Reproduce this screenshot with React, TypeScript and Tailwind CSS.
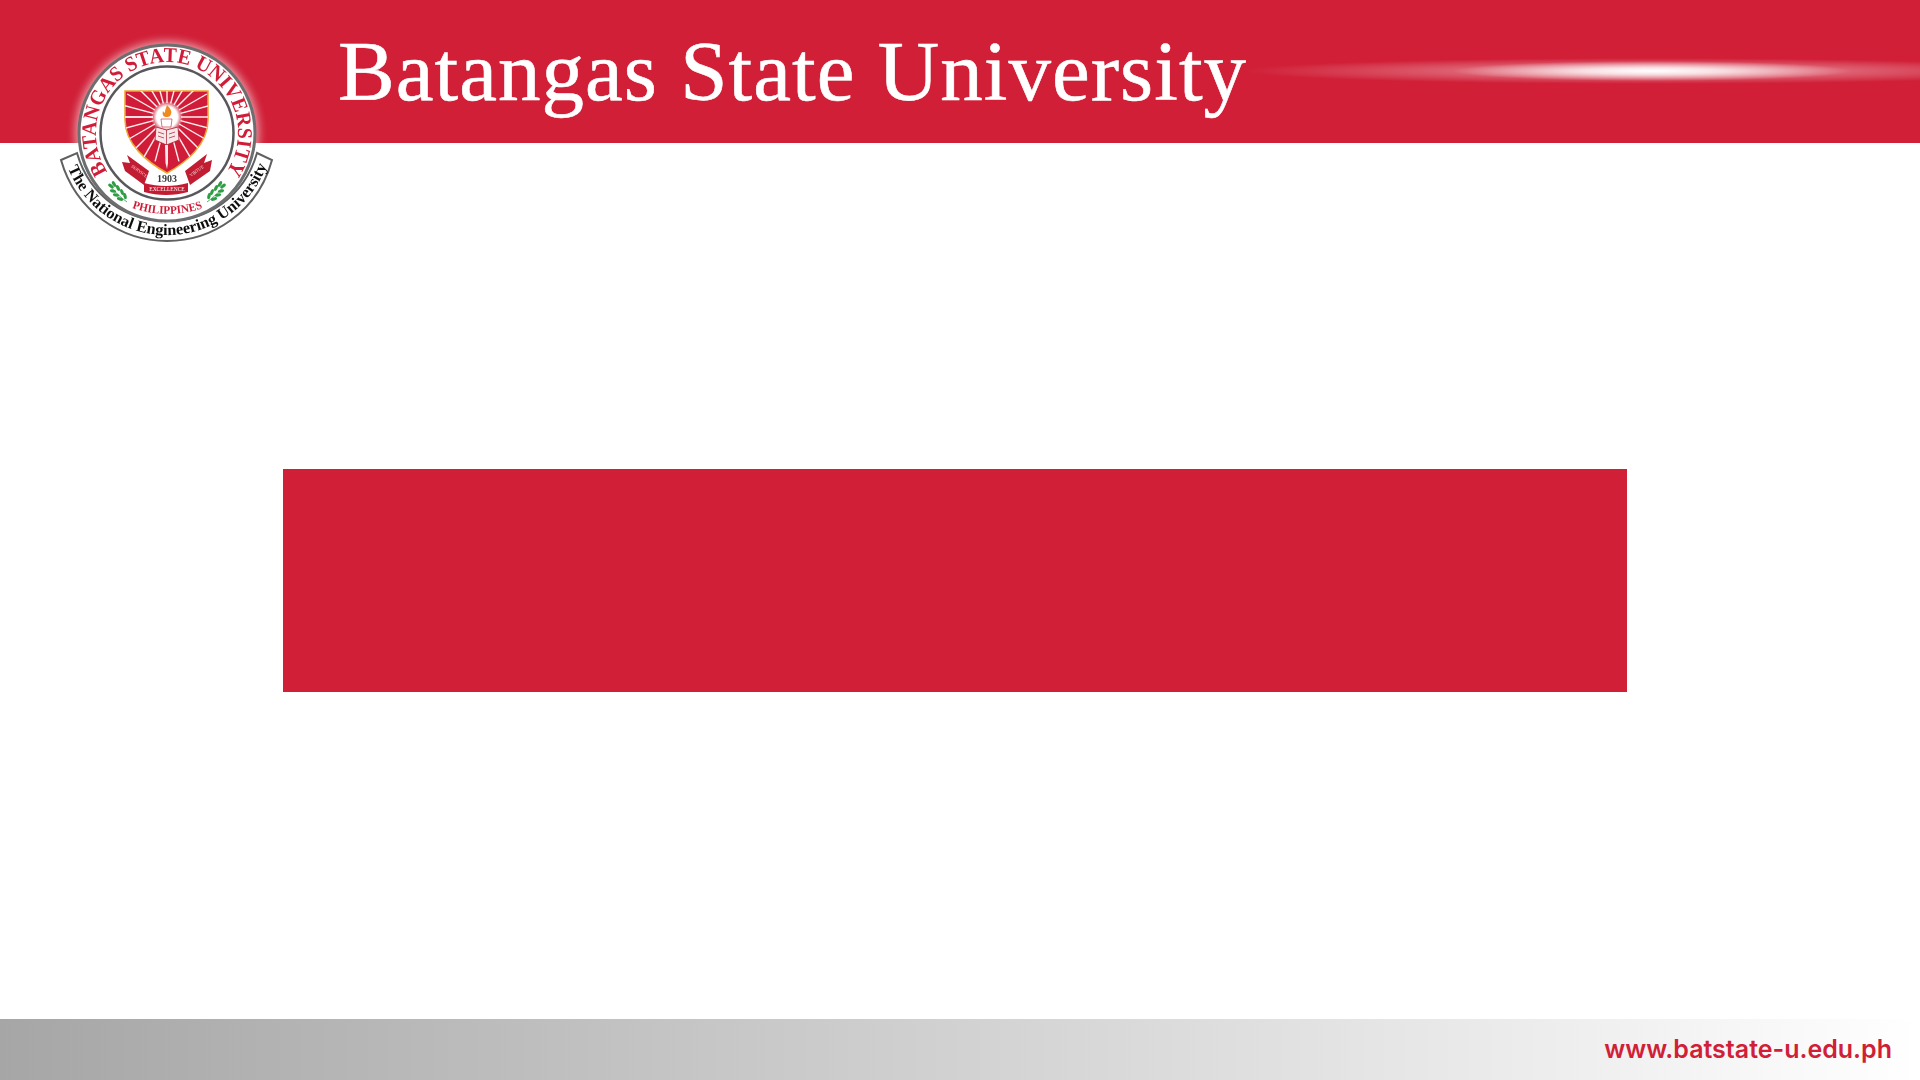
import React from 'react';

const RED = '#d01f37';
const SERIF = "'Liberation Serif', serif";

// Seal of the university, drawn in the coordinates of a 260x240 box
const Laurel: React.FC<{ mirror?: boolean }> = ({ mirror }) => {
  const leaves = [
    [71, 166, 35],
    [74, 164, 60],
    [73, 171, 15],
    [78, 168, 65],
    [76, 175, 15],
    [82, 172, 70],
    [80, 179, 20],
    [85, 176, 75],
  ];
  return (
    <g transform={mirror ? 'translate(254 0) scale(-1 1)' : undefined} fill="#2f9e44">
      <path d="M69 165C74 171 80 177 87 182" stroke="#2f9e44" strokeWidth="0.8" fill="none" />
      {leaves.map(([x, y, r]) => (
        <ellipse key={`${x}-${y}`} cx={x} cy={y} rx="3.2" ry="1.6" transform={`rotate(${r} ${x} ${y})`} />
      ))}
    </g>
  );
};

const Seal: React.FC = () => {
  const rays = Array.from({ length: 25 }, (_, i) => -180 + i * 15);
  return (
    <svg viewBox="0 0 260 240" className="absolute left-[40px] top-[20px] w-[260px] h-[240px]">
      <defs>
        <filter id="glow" x="-20%" y="-20%" width="140%" height="140%">
          <feGaussianBlur stdDeviation="4" />
        </filter>
        <filter id="soft" x="-5%" y="-5%" width="110%" height="110%">
          <feGaussianBlur stdDeviation="0.35" />
        </filter>
        <clipPath id="shield">
          <path d="M85 71H168V100C168 124 147 142 127 153C107 142 85 124 85 100Z" />
        </clipPath>
        <radialGradient id="halo">
          <stop offset="0%" stopColor="#ffffff" />
          <stop offset="65%" stopColor="#ffffff" />
          <stop offset="100%" stopColor="#ffffff" stopOpacity="0" />
        </radialGradient>
        <path id="bandText" d="M28 148A106.5 106.5 0 0 0 227 145" />
        <path id="ringText" d="M67.5 151.7A71 71 0 1 1 186.5 151.7" />
        <path id="philText" d="M92 188A110 110 0 0 0 163 188" />
      </defs>

      <circle cx="127" cy="113" r="92" fill="#ffffff" opacity="0.55" filter="url(#glow)" />

      <g filter="url(#soft)">
        {/* lower band */}
        <path
          d="M21 140L37 133C50 178 88 201 127 201C166 201 204 178 217 133L232 140C218 192 172 221 127 221C82 221 36 192 21 140Z"
          fill="#ffffff"
          stroke="#5f6062"
          strokeWidth="2"
        />

        {/* ring */}
        <circle cx="127" cy="113" r="88" fill="#ffffff" stroke="#6d6e70" strokeWidth="3" />
        <circle cx="127" cy="113" r="66.5" fill="#ffffff" stroke="#58595b" strokeWidth="2.5" />

        <text fill={RED} fontFamily={SERIF} fontWeight="700" fontSize="21">
          <textPath href="#ringText" textLength="305" lengthAdjust="spacingAndGlyphs">
            BATANGAS STATE UNIVERSITY
          </textPath>
        </text>

        <text fill="#111111" fontFamily={SERIF} fontWeight="700" fontSize="16">
          <textPath href="#bandText" textLength="256" lengthAdjust="spacingAndGlyphs">
            The National Engineering University
          </textPath>
        </text>

        {/* shield */}
        <path d="M85 71H168V100C168 124 147 142 127 153C107 142 85 124 85 100Z" fill={RED} stroke="#efa52e" strokeWidth="1.5" />
        <g clipPath="url(#shield)" stroke="#fdeef0" strokeWidth="1.4">
          {rays.map((deg) => (
            <line
              key={deg}
              x1={127 + 14 * Math.cos((deg * Math.PI) / 180)}
              y1={97 + 14 * Math.sin((deg * Math.PI) / 180)}
              x2={127 + 46 * Math.cos((deg * Math.PI) / 180)}
              y2={97 + 46 * Math.sin((deg * Math.PI) / 180)}
            />
          ))}
        </g>
        <circle cx="127" cy="97" r="16" fill="url(#halo)" />
        <path d="M127 85C131 89 132 92 131 94C130 97 128 97 126 97C123 97 122 94 123 91C124 93 125 93 125 92C125 90 126 88 127 85Z" fill="#f08a1d" />
        <path d="M121 99H132L131 107H122Z" fill="#ffffff" stroke="#c93a4d" strokeWidth="0.7" />
        <path d="M116 107L126.5 110L138 107L139 120L126.5 125L115 120Z" fill="#f9e6e8" stroke="#a61a2d" strokeWidth="0.8" />
        <path d="M126.5 110V125M118 112L124 114M118 116L124 118M129 114L135 112M129 118L135 116" stroke="#a61a2d" strokeWidth="0.7" />
        <path d="M125 125H128L128 143L127 149L125.5 143Z" fill="#fbeaec" />

        {/* ribbons */}
        <path d="M87 135L109 151L104 165L85 151L82 142L90 143Z" fill="#c21c32" />
        <path d="M167 134L145 151L150 165L170 151L172 140L164 143Z" fill="#c21c32" />
        <path d="M104 163C118 167 134 167 148 163V172C134 176 118 176 104 172Z" fill="#c21c32" />
        <text x="91" y="147" transform="rotate(36 91 147)" fill="#f7d5da" fontFamily={SERIF} fontSize="4.5">SERVICE</text>
        <text x="151" y="157" transform="rotate(-36 151 157)" fill="#f7d5da" fontFamily={SERIF} fontSize="4.5">VIRTUE</text>
        <text x="127" y="162" textAnchor="middle" fill="#3a3a3a" fontFamily={SERIF} fontWeight="700" fontSize="10">1903</text>
        <text x="127" y="171" textAnchor="middle" fill="#ffffff" fontFamily={SERIF} fontSize="5.5">EXCELLENCE</text>

        {/* laurels */}
        <Laurel />
        <Laurel mirror />

        <text fill={RED} fontFamily={SERIF} fontWeight="700" fontSize="11.5">
          <textPath href="#philText" textLength="72" lengthAdjust="spacingAndGlyphs">
            PHILIPPINES
          </textPath>
        </text>
      </g>
    </svg>
  );
};

export default function App() {
  return (
    <div className="relative w-[1920px] h-[1080px] overflow-hidden bg-white flex flex-col">
      {/* Header band */}
      <header className="relative h-[143px] bg-[#d01f37] pl-[338px] pt-[21px] overflow-hidden">
        <h1 className="font-['Liberation_Serif',serif] text-[85px] leading-[100px] font-normal tracking-[1.05px] [-webkit-text-stroke:0.6px_white] text-white whitespace-nowrap">
          Batangas State University
        </h1>
        <div className="absolute left-[1242px] top-[58px] w-[820px] h-[26px] bg-[radial-gradient(closest-side,rgba(255,255,255,0.5)_0%,rgba(255,255,255,0.28)_50%,rgba(255,255,255,0)_100%)]" />
        <div className="absolute left-[1452px] top-[61px] w-[400px] h-[20px] bg-[radial-gradient(closest-side,rgba(255,255,255,1)_0%,rgba(255,255,255,0.75)_35%,rgba(255,255,255,0)_100%)]" />
      </header>

      <Seal />

      {/* Centre block */}
      <main className="flex-1 pt-[326px] pl-[283px]">
        <div className="w-[1344px] h-[223px] bg-[#d01f37]" />
      </main>

      {/* Footer */}
      <footer className="h-[61px] flex items-center justify-end pr-[28px] bg-gradient-to-r from-[#a6a6a6] to-[#ffffff]">
        <span className="font-['Inter',sans-serif] text-[25px] font-semibold text-[#d01f37] whitespace-nowrap">
          www.batstate-u.edu.ph
        </span>
      </footer>
    </div>
  );
}
